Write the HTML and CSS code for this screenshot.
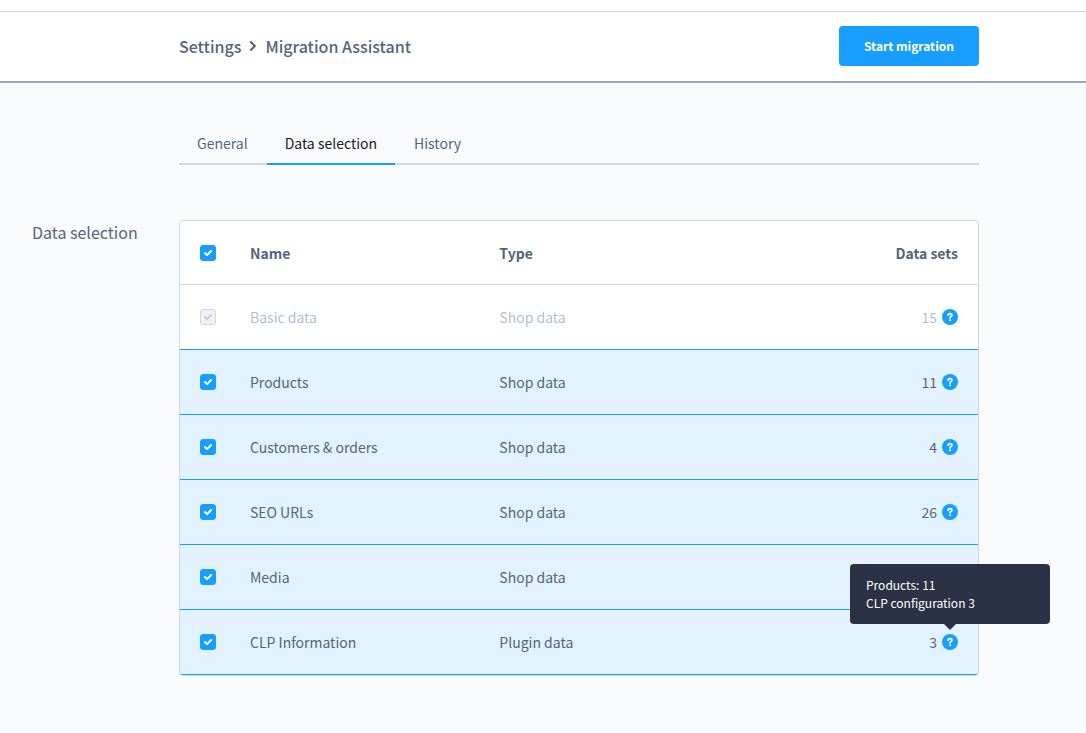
FILE: index.html
```html
<!DOCTYPE html>
<html lang="en">
<head>
<meta charset="utf-8">
<meta name="viewport" content="width=device-width, initial-scale=1">
<title>Migration Assistant</title>
<link rel="stylesheet" href="styles.css">
</head>
<body>
<svg class="sprite" aria-hidden="true">
  <symbol id="check" viewBox="0 0 16 16"><path d="M4.900 8.100 7.100 10.100 11.100 6" fill="none" stroke="currentColor" stroke-width="2" stroke-linecap="round" stroke-linejoin="round"/></symbol>
  <symbol id="help" viewBox="0 0 16 16"><circle cx="8" cy="8" r="8" fill="#189eff"/><path d="M6.100 6.300C6.100 5.100 7 4.600 8 4.600s1.900.6 1.900 1.600C9.900 7.300 8.100 7.400 8.100 8.900" fill="none" stroke="#fff" stroke-width="1.700" stroke-linecap="round" stroke-linejoin="round"/><circle cx="8.100" cy="11.300" r="1.050" fill="#fff"/></symbol>
</svg>
<div class="topbar"></div>
<header class="header">
  <nav class="breadcrumb" aria-label="Breadcrumb">
    <a href="#settings">Settings</a>
    <svg class="chevron" viewBox="0 0 8 12" aria-hidden="true"><path d="M1.300 1.500 5.800 6 1.300 10.500" fill="none" stroke="currentColor" stroke-width="2"/></svg>
    <a href="#migration" aria-current="page">Migration Assistant</a>
  </nav>
  <button class="button" type="button">Start migration</button>
</header>
<main class="content">
  <nav class="tabs" aria-label="Migration">
    <a class="tab" href="#general">General</a>
    <a class="tab tab-active" href="#data" aria-current="page">Data selection</a>
    <a class="tab" href="#history">History</a>
  </nav>
  <h2 class="section-title">Data selection</h2>
  <div class="card">
    <table class="grid">
      <colgroup><col class="col-check"><col><col><col></colgroup>
      <thead>
        <tr>
          <th scope="col"><label class="checkbox"><input type="checkbox" checked aria-label="Select all"><svg aria-hidden="true"><use href="#check"/></svg></label></th>
          <th scope="col">Name</th><th scope="col">Type</th><th scope="col" class="number">Data sets</th>
        </tr>
      </thead>
      <tbody>
        <tr class="disabled">
          <td><label class="checkbox"><input type="checkbox" checked disabled aria-label="Basic data"><svg aria-hidden="true"><use href="#check"/></svg></label></td>
          <td>Basic data</td><td>Shop data</td>
          <td><div class="count">15<button class="help" type="button" aria-label="Details"><svg aria-hidden="true"><use href="#help"/></svg></button></div></td>
        </tr>
        <tr class="selected">
          <td><label class="checkbox"><input type="checkbox" checked aria-label="Products"><svg aria-hidden="true"><use href="#check"/></svg></label></td>
          <td>Products</td><td>Shop data</td>
          <td><div class="count">11<button class="help" type="button" aria-label="Details"><svg aria-hidden="true"><use href="#help"/></svg></button></div></td>
        </tr>
        <tr class="selected">
          <td><label class="checkbox"><input type="checkbox" checked aria-label="Customers &amp; orders"><svg aria-hidden="true"><use href="#check"/></svg></label></td>
          <td>Customers &amp; orders</td><td>Shop data</td>
          <td><div class="count">4<button class="help" type="button" aria-label="Details"><svg aria-hidden="true"><use href="#help"/></svg></button></div></td>
        </tr>
        <tr class="selected">
          <td><label class="checkbox"><input type="checkbox" checked aria-label="SEO URLs"><svg aria-hidden="true"><use href="#check"/></svg></label></td>
          <td>SEO URLs</td><td>Shop data</td>
          <td><div class="count">26<button class="help" type="button" aria-label="Details"><svg aria-hidden="true"><use href="#help"/></svg></button></div></td>
        </tr>
        <tr class="selected">
          <td><label class="checkbox"><input type="checkbox" checked aria-label="Media"><svg aria-hidden="true"><use href="#check"/></svg></label></td>
          <td>Media</td><td>Shop data</td>
          <td></td>
        </tr>
        <tr class="selected">
          <td><label class="checkbox"><input type="checkbox" checked aria-label="CLP Information"><svg aria-hidden="true"><use href="#check"/></svg></label></td>
          <td>CLP Information</td><td>Plugin data</td>
          <td><div class="count">3<span class="help-wrap"><button class="help" type="button" aria-label="Details" aria-describedby="tip"><svg aria-hidden="true"><use href="#help"/></svg></button><span class="tooltip" role="tooltip" id="tip">Products: 11<br>CLP configuration 3</span></span></div></td>
        </tr>
      </tbody>
    </table>
  </div>
</main>
</body>
</html>
```
FILE: styles.css
```css
* { box-sizing: border-box; }
body {
  margin: 0;
  background: #f9fafc;
  color: #52667a;
  font-family: "Source Sans Pro", "Noto Sans CJK SC", "Noto Sans", sans-serif;
  font-size: 14px;
  line-height: 20px;
}
a { color: inherit; text-decoration: none; }
.sprite { display: none; }
.topbar { height: 12px; background: #fff; border-bottom: 1px solid #d1d9e0; }
.header {
  display: flex;
  align-items: center;
  justify-content: space-between;
  padding: 14px 107px 15px 179px;
  background: #fff;
  border-bottom: 2px solid #98a7b8;
}
.breadcrumb { display: flex; align-items: center; gap: 8px; font-size: 16px; font-weight: 500; line-height: 24px; }
.chevron { width: 8px; height: 12px; }
.button {
  height: 40px;
  padding: 0 25px;
  border: 0;
  border-radius: 4px;
  background: #189eff;
  color: #fff;
  font-family: inherit;
  font-size: 12px;
  font-weight: 700;
  line-height: 20px;
}
.content {
  display: grid;
  grid-template-columns: 147px minmax(0, 1fr);
  padding: 40px 107px 56px 32px;
}
.tabs {
  grid-column: 2;
  display: flex;
  gap: 1px;
  margin-bottom: 55px;
  border-bottom: 2px solid #d1d9e0;
}
.tab { margin-bottom: -2px; padding: 10px 18px; border-bottom: 2px solid transparent; }
.tab-active { border-color: #189eff; color: #16191c; }
.section-title { margin: 0; font-size: 16px; font-weight: 400; line-height: 24px; }
.card { border: 1px solid #d1d9e0; border-radius: 4px; background: #fff; }
.grid { width: 100%; border-collapse: separate; border-spacing: 0; table-layout: fixed; }
.col-check { width: 50px; }
th, td { height: 65px; padding: 0 20px; border-bottom: 1px solid #d1d9e0; text-align: left; vertical-align: middle; }
th { height: 64px; font-weight: 700; }
th:first-child, td:first-child { padding-right: 0; }
th.number { text-align: right; }
.disabled td { border-bottom-color: #189eff; color: #b3bfcc; }
.selected td { border-bottom-color: #189eff; background: #e2f3ff; }
tr:last-child td:first-child { border-bottom-left-radius: 3px; }
tr:last-child td:last-child { border-bottom-right-radius: 3px; }
.checkbox { display: grid; width: 16px; height: 16px; color: #fff; }
.checkbox > * { grid-area: 1 / 1; width: 16px; height: 16px; }
.checkbox input { appearance: none; margin: 0; border: 1px solid #189eff; border-radius: 3px; background: #189eff; }
.checkbox input:disabled { border-color: #d1d9e0; background: #f0f2f5; }
.checkbox input:disabled + svg { color: #c3ced9; }
.checkbox svg { pointer-events: none; }
.count { display: flex; align-items: center; justify-content: flex-end; gap: 5px; }
.help { display: block; width: 16px; height: 16px; padding: 0; border: 0; background: none; }
.help svg { display: block; width: 16px; height: 16px; }
.help-wrap { position: relative; }
.tooltip {
  position: absolute;
  bottom: 26px;
  left: 50%;
  width: 200px;
  margin-left: -100px;
  padding: 12px 16px;
  border-radius: 4px;
  background: #2b3245;
  color: #fff;
  font-size: 12px;
  line-height: 18px;
}
.tooltip::after {
  content: "";
  position: absolute;
  top: 100%;
  left: 50%;
  margin-left: -6px;
  border: 6px solid transparent;
  border-top-color: #2b3245;
  border-bottom: 0;
}
```
